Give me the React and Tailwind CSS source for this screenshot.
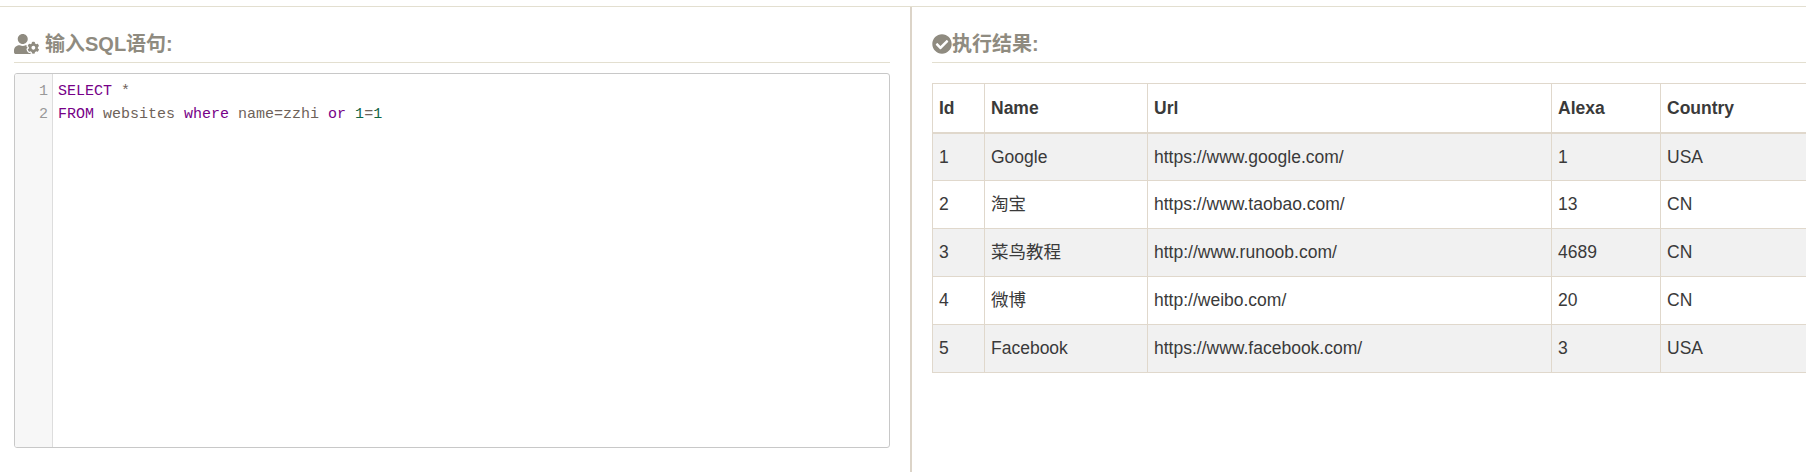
import { FaUserCog, FaCheckCircle } from 'react-icons/fa'

const rows = [
  ['1', 'Google', 'https://www.google.com/', '1', 'USA'],
  ['2', '淘宝', 'https://www.taobao.com/', '13', 'CN'],
  ['3', '菜鸟教程', 'http://www.runoob.com/', '4689', 'CN'],
  ['4', '微博', 'http://weibo.com/', '20', 'CN'],
  ['5', 'Facebook', 'https://www.facebook.com/', '3', 'USA'],
]

const sans = "font-['Liberation_Sans','Noto_Sans_CJK_SC',sans-serif]"
const cell = 'border border-[#e0d8cc] px-[6px] py-0 text-left align-middle'

function Heading({ icon, children }) {
  return (
    <h3 className="flex h-[56px] items-end border-b border-[#e3dfd0] pb-[4px] text-[20px] leading-[28px] font-bold text-[#8f8b80]">
      {icon}
      {children}
    </h3>
  )
}

export default function App() {
  return (
    <div className={`${sans} h-[472px] w-[1806px] overflow-hidden bg-white`}>
      <div className="mt-[6px] flex h-[466px] border-t border-[#e3dfd0]">
        {/* Left: SQL input */}
        <div className="w-[910px] shrink-0 pl-[14px] pr-[20px]">
          <Heading icon={<FaUserCog className="mr-[6px] mb-[4px] h-[20px] w-[25px] shrink-0" />}>输入SQL语句:</Heading>
          <div className="mt-[10px] flex h-[375px] overflow-hidden rounded-[3px] border border-[#c8c8c8] font-['Liberation_Mono',monospace] text-[15px] leading-[23px]">
            <div className="w-[38px] shrink-0 border-r border-[#ddd] bg-[#f7f7f7] pt-[6px] pr-[4px] text-right text-[#999]">
              <div>1</div>
              <div>2</div>
            </div>
            <div className="flex-1 pt-[6px] pl-[5px] whitespace-pre text-[#6e6259]">
              <div>
                <span className="text-[#770088]">SELECT</span> *
              </div>
              <div>
                <span className="text-[#770088]">FROM</span> websites <span className="text-[#770088]">where</span> name=zzhi <span className="text-[#770088]">or</span> <span className="text-[#116644]">1</span>=<span className="text-[#116644]">1</span>
              </div>
            </div>
          </div>
        </div>

        {/* Right: results */}
        <div className="min-w-0 flex-1 border-l-2 border-[#dcd4c8] pl-[20px]">
          <Heading icon={<FaCheckCircle className="mb-[4px] h-[20px] w-[20px] shrink-0" />}>执行结果:</Heading>
          <table className="mt-[20px] w-[1000px] table-fixed border-collapse text-[17.5px] text-[#3a3a3a]">
            <colgroup>
              <col className="w-[52px]" />
              <col className="w-[163px]" />
              <col className="w-[404px]" />
              <col className="w-[109px]" />
              <col />
            </colgroup>
            <thead>
              <tr>
                {['Id', 'Name', 'Url', 'Alexa', 'Country'].map((h) => (
                  <th key={h} className={`${cell} h-[49px] border-b-2 font-bold`}>{h}</th>
                ))}
              </tr>
            </thead>
            <tbody>
              {rows.map((row, i) => (
                <tr key={row[0]} className={i % 2 === 0 ? 'bg-[#f1f1f1]' : 'bg-white'}>
                  {row.map((v, j) => (
                    <td key={j} className={`${cell} h-[48px]`}>{v}</td>
                  ))}
                </tr>
              ))}
            </tbody>
          </table>
        </div>
      </div>
    </div>
  )
}
